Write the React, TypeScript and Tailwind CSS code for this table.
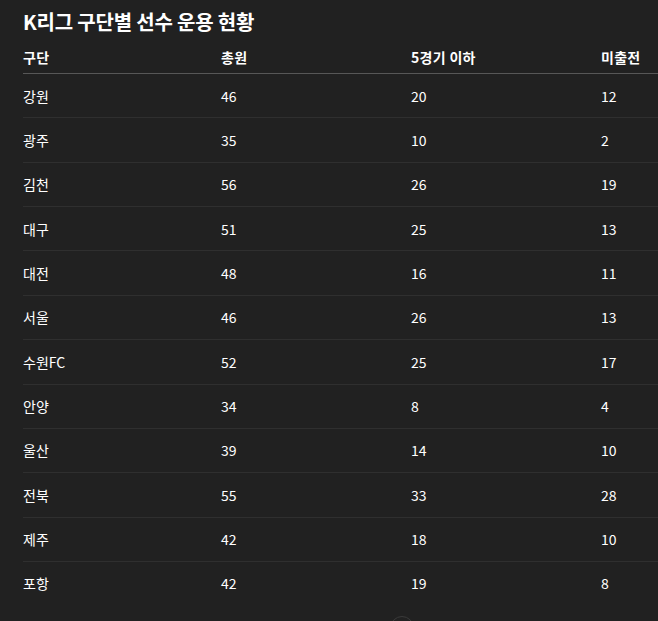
import React from "react";

const rows: [string, number, number, number][] = [
  ["강원", 46, 20, 12],
  ["광주", 35, 10, 2],
  ["김천", 56, 26, 19],
  ["대구", 51, 25, 13],
  ["대전", 48, 16, 11],
  ["서울", 46, 26, 13],
  ["수원FC", 52, 25, 17],
  ["안양", 34, 8, 4],
  ["울산", 39, 14, 10],
  ["전북", 55, 33, 28],
  ["제주", 42, 18, 10],
  ["포항", 42, 19, 8],
];

export default function App() {
  return (
    <div
      className="relative w-[658px] h-[621px] overflow-hidden bg-[#212121] text-white pl-[23px]"
      style={{ fontFamily: '"Noto Sans CJK KR", "Noto Sans", sans-serif' }}
    >
      <h2 className="text-[20px] font-bold leading-[28px] pt-[8px] pb-[5px] tracking-[-0.2px]">
        K리그 구단별 선수 운용 현황
      </h2>
      <table className="table-fixed border-collapse w-[768px] text-[14px]">
        <colgroup>
          <col className="w-[198px]" />
          <col className="w-[190px]" />
          <col className="w-[190px]" />
          <col className="w-[190px]" />
        </colgroup>
        <thead>
          <tr className="border-b border-[#575757]">
            {["구단", "총원", "5경기 이하", "미출전"].map((h) => (
              <th key={h} className="text-left font-bold leading-[20px] py-[6px] px-0 tracking-[0.3px]">
                {h}
              </th>
            ))}
          </tr>
        </thead>
        <tbody>
          {rows.map((r, ri) => (
            <tr
              key={r[0]}
              className={ri < rows.length - 1 ? "border-b border-[#2f2f2f]" : ""}
            >
              {r.map((c, i) => (
                <td key={i} className="text-left leading-[20.36px] py-[11.5px] px-0">
                  {c}
                </td>
              ))}
            </tr>
          ))}
        </tbody>
      </table>
      <div className="absolute left-[390px] top-[616px] w-[24px] h-[24px] rounded-full border border-[#3a3a3a]" />
    </div>
  );
}
